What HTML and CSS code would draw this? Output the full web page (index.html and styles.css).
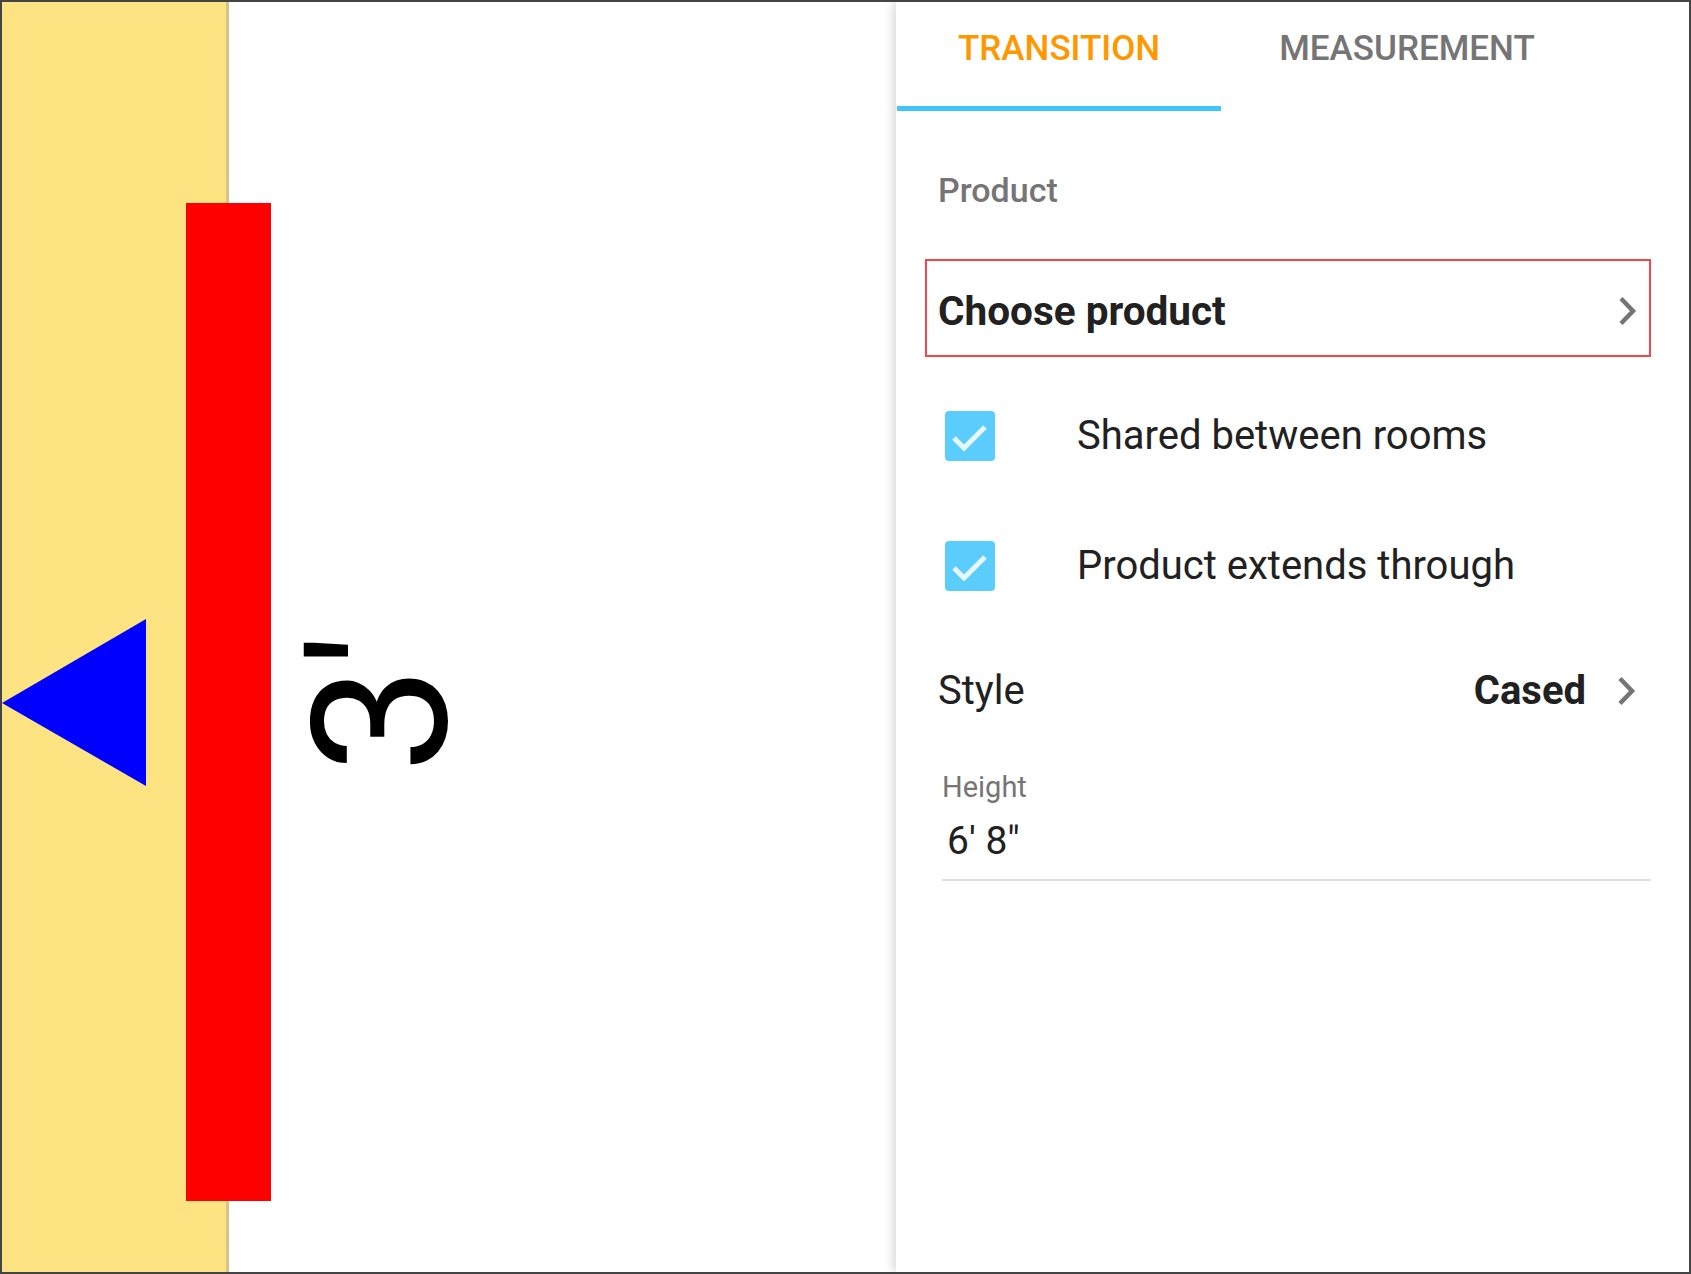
FILE: index.html
```html
<!DOCTYPE html>
<html lang="en">
<head>
<meta charset="utf-8">
<title>Transition</title>
<link rel="stylesheet" href="styles.css">
</head>
<body>
<div class="frame">
  <div class="canvas">
    <svg class="plan" width="894" height="1270" viewBox="0 0 894 1270">
      <rect x="0" y="0" width="224" height="1270" fill="#fde382"/>
      <rect x="224" y="0" width="3" height="1270" fill="#d3c48c"/>
      <rect x="184" y="201" width="85" height="998" fill="#ff0000"/>
      <polygon points="0,701 144,617 144,784" fill="#0000ff"/>
      <text class="dim" transform="translate(444,771) rotate(-90)">3'</text>
    </svg>
  </div>
  <aside class="panel">
    <nav class="tabs">
      <div class="tab tab-active">TRANSITION</div>
      <div class="tab tab-second">MEASUREMENT</div>
    </nav>
    <div class="section-label">Product</div>
    <div class="choose">
      <span class="choose-text">Choose product</span>
      <svg class="chev" width="20" height="30" viewBox="0 0 20 30"><path d="M3 2.5 L15 15 L3 27.5" fill="none" stroke="#757575" stroke-width="4.5"/></svg>
    </div>
    <div class="check-row check-first">
      <span class="checkbox"><svg width="50" height="50" viewBox="0 0 50 50"><path d="M9 27 L19 37 L40 16" fill="none" stroke="#e6f7ff" stroke-width="5"/></svg></span>
      <span class="check-label">Shared between rooms</span>
    </div>
    <div class="check-row">
      <span class="checkbox"><svg width="50" height="50" viewBox="0 0 50 50"><path d="M9 27 L19 37 L40 16" fill="none" stroke="#e6f7ff" stroke-width="5"/></svg></span>
      <span class="check-label">Product extends through</span>
    </div>
    <div class="style-row">
      <span class="style-label">Style</span>
      <span class="style-value">Cased</span>
      <svg class="chev" width="20" height="30" viewBox="0 0 20 30"><path d="M3 2.5 L15 15 L3 27.5" fill="none" stroke="#757575" stroke-width="4.5"/></svg>
    </div>
    <div class="field">
      <div class="field-label">Height</div>
      <div class="field-value">6' 8"</div>
    </div>
  </aside>
</div>
</body>
</html>
```

FILE: styles.css
```css
html, body {
  margin: 0;
  padding: 0;
  background: #ffffff;
}
body {
  font-family: Roboto, "Noto Sans", sans-serif;
  color: #212121;
}
.frame {
  box-sizing: border-box;
  width: 1691px;
  height: 1274px;
  border: 2px solid #444444;
  display: flex;
  overflow: hidden;
}
.canvas {
  width: 894px;
  flex: none;
  height: 100%;
  background: #ffffff;
}
.plan {
  display: block;
}
.dim {
  font-family: Roboto, "Liberation Sans", sans-serif;
  font-size: 190px;
  fill: #000000;
}
.panel {
  flex: 1;
  height: 100%;
  background: #ffffff;
  box-shadow: -4px 0 8px rgba(0, 0, 0, 0.13);
  position: relative;
}
.tabs {
  display: flex;
  height: 109px;
}
.tab {
  box-sizing: border-box;
  height: 109px;
  padding: 27px 61px 0;
  font-size: 35px;
  font-weight: 500;
  line-height: 40px;
  color: #757575;
}
.tab-second {
  padding-left: 58px;
}
.tab-active {
  color: #ff9800;
  border-bottom: 5px solid #40c4ff;
  margin-left: 1px;
}
.section-label {
  margin: 59px 0 0 42px;
  font-size: 34px;
  font-weight: 500;
  line-height: 40px;
  color: #757575;
}
.choose {
  box-sizing: border-box;
  margin: 49px 0 0 29px;
  width: 726px;
  height: 98px;
  border: 2px solid #f04848;
  display: flex;
  align-items: center;
  justify-content: space-between;
  padding: 6px 11px 0 11px;
}
.choose-text {
  font-size: 40.5px;
  font-weight: 700;
  line-height: 48px;
  color: #212121;
}
.chev {
  display: block;
}
.check-row {
  display: flex;
  align-items: center;
  height: 130px;
  padding-left: 49px;
}
.check-first {
  margin-top: 14px;
}
.checkbox {
  width: 50px;
  height: 50px;
  border-radius: 4px;
  background: #5bcdfd;
  flex: none;
}
.checkbox svg {
  display: block;
}
.check-label {
  margin-left: 82px;
  font-size: 40px;
  line-height: 48px;
  color: #212121;
}
.style-row {
  display: flex;
  align-items: center;
  height: 120px;
  padding: 0 52px 0 42px;
}
.style-label {
  flex: 1;
  font-size: 40px;
  line-height: 48px;
}
.style-value {
  font-size: 40px;
  font-weight: 700;
  line-height: 48px;
  margin-right: 31px;
}
.field {
  margin: 19px 38px 0 46px;
  border-bottom: 2px solid #e0e0e0;
  padding-bottom: 14px;
}
.field-label {
  font-size: 29px;
  line-height: 34px;
  color: #757575;
}
.field-value {
  margin-top: 13px;
  padding-left: 5px;
  font-size: 39px;
  line-height: 48px;
  color: #212121;
}
```
